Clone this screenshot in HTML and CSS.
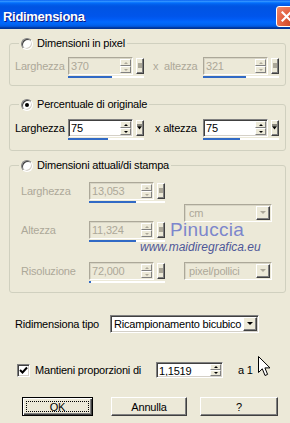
FILE: index.html
```html
<!DOCTYPE html>
<html lang="it">
<head>
<meta charset="utf-8">
<title>Ridimensiona</title>
<link rel="stylesheet" href="styles.css">
</head>
<body>
<div class="titlebar">
  <span class="title">Ridimensiona</span>
  <span class="close"><svg width="11" height="11" viewBox="0 0 11 11"><path d="M1.5 1.5 L9.5 9.5 M9.5 1.5 L1.5 9.5" stroke="#fff" stroke-width="2.2" stroke-linecap="square"/></svg></span>
</div>

<div class="content">
  <fieldset class="group g1">
    <legend><span class="radio"></span><span>Dimensioni in pixel</span></legend>
    <div class="row dis">
      <span class="lbl">Larghezza</span>
      <div class="num">
        <div class="box"><span class="field">370</span><span class="spin"><span class="up"></span><span class="dn"></span></span></div>
        <span class="sq"><i class="stop"></i></span>
        <div class="bar"><i style="width:44px"></i></div>
      </div>
      <span class="lbl x">x&nbsp; altezza</span>
      <div class="num">
        <div class="box"><span class="field">321</span><span class="spin"><span class="up"></span><span class="dn"></span></span></div>
        <span class="sq"><i class="stop"></i></span>
        <div class="bar"><i style="width:43px"></i></div>
      </div>
    </div>
  </fieldset>

  <fieldset class="group g2">
    <legend><span class="radio on"></span><span>Percentuale di originale</span></legend>
    <div class="row">
      <span class="lbl">Larghezza</span>
      <div class="num">
        <div class="box"><span class="field">75</span><span class="spin"><span class="up"></span><span class="dn"></span></span></div>
        <span class="sq"><svg width="6" height="7" viewBox="0 0 6 7"><path d="M0 0.5 H6" stroke="#000"/><path d="M0 2 H6 L3 6 Z" fill="#000"/></svg></span>
        <div class="bar"><i style="width:40px"></i></div>
      </div>
      <span class="lbl x2">x altezza</span>
      <div class="num">
        <div class="box"><span class="field">75</span><span class="spin"><span class="up"></span><span class="dn"></span></span></div>
        <span class="sq"><svg width="6" height="7" viewBox="0 0 6 7"><path d="M0 0.5 H6" stroke="#000"/><path d="M0 2 H6 L3 6 Z" fill="#000"/></svg></span>
        <div class="bar"><i style="width:37px"></i></div>
      </div>
    </div>
  </fieldset>

  <fieldset class="group g3">
    <legend><span class="radio"></span><span>Dimensioni attuali/di stampa</span></legend>
    <div class="g3body dis">
      <div class="g3left">
        <div class="prow">
          <span class="lbl">Larghezza</span>
          <div class="num">
            <div class="box"><span class="field">13,053</span><span class="spin"><span class="up"></span><span class="dn"></span></span></div>
            <span class="sq"><i class="stop"></i></span>
            <div class="bar"><i style="width:47px"></i></div>
          </div>
        </div>
        <div class="prow r2">
          <span class="lbl">Altezza</span>
          <div class="num">
            <div class="box"><span class="field">11,324</span><span class="spin"><span class="up"></span><span class="dn"></span></span></div>
            <span class="sq"><i class="stop"></i></span>
            <div class="bar"><i style="width:47px"></i></div>
          </div>
        </div>
        <div class="prow r3">
          <span class="lbl">Risoluzione</span>
          <div class="num">
            <div class="box"><span class="field">72,000</span><span class="spin"><span class="up"></span><span class="dn"></span></span></div>
            <span class="sq"><i class="stop"></i></span>
            <div class="bar"><i style="width:2px"></i></div>
          </div>
        </div>
      </div>
      <div class="g3right">
        <div class="combo c1"><span class="val">cm</span><span class="dd"><i class="tri"></i></span></div>
        <div class="combo c2"><span class="val">pixel/pollici</span><span class="dd"><i class="tri"></i></span></div>
      </div>
    </div>
  </fieldset>

  <div class="tiporow">
    <span class="tlabel">Ridimensiona tipo</span>
    <div class="combo sel"><span class="val">Ricampionamento bicubico</span><span class="dd"><i class="tri"></i></span></div>
  </div>

  <div class="checkrow">
    <span class="check"><svg width="9" height="9" viewBox="0 0 9 9"><path d="M1 4 L3.5 6.5 L8 1.5" fill="none" stroke="#000" stroke-width="2"/></svg></span>
    <span class="clabel">Mantieni proporzioni di</span>
    <div class="box ratio"><span class="field">1,1519</span><span class="spin"><span class="up"></span><span class="dn"></span></span></div>
    <span class="a1">a 1</span>
  </div>

  <div class="buttons">
    <button class="btn ok"><span class="focus">OK</span></button>
    <button class="btn annulla">Annulla</button>
    <button class="btn help">?</button>
  </div>
</div>

<div class="watermark">
  <span class="wm1">Pinuccia</span>
  <span class="wm2">www.maidiregrafica.eu</span>
</div>

<svg class="cursor" width="13" height="21" viewBox="0 0 13 21"><path d="M0.5 0.5 L0.5 16.5 L4.3 12.8 L7 19.5 L9.6 18.4 L6.9 11.9 L12 11.9 Z" fill="#fff" stroke="#000" stroke-width="1" stroke-linejoin="miter"/></svg>
</body>
</html>
```

FILE: styles.css
```css
* { box-sizing: border-box; }
html, body { margin: 0; padding: 0; }
body {
  width: 290px;
  height: 423px;
  overflow: hidden;
  position: relative;
  background: #ece9d8;
  font-family: "Liberation Sans", Arial, sans-serif;
  font-size: 11px;
  letter-spacing: -0.2px;
  color: #000;
}

/* ---------- title bar ---------- */
.titlebar {
  height: 29px;
  display: flex;
  align-items: center;
  justify-content: space-between;
  padding-left: 3px;
  background: linear-gradient(to bottom, #0058ee 0%, #3593ff 4%, #288eff 6%, #127dff 8%, #036ffc 10%, #0262ee 14%, #0057e5 20%, #0054e3 24%, #0055eb 56%, #005bf5 66%, #026afe 76%, #0062ef 86%, #0052d6 92%, #0040ab 94%, #003092 100%);
}
.title {
  color: #fff;
  font-weight: bold;
  font-size: 13px;
  letter-spacing: -0.3px;
  text-shadow: 1px 1px #0a1883;
  padding-top: 4px;
}
.close {
  width: 21px;
  height: 21px;
  margin-top: 4px;
  margin-right: -7px;
  border: 1px solid #fff;
  border-radius: 3px;
  background: radial-gradient(circle at 80% 80%, #cc4625 0%, #e25f3e 45%, #f08a6d 100%);
  display: flex;
  align-items: center;
  justify-content: center;
}

/* ---------- layout ---------- */
.content { padding: 8px 4px 0 9px; }

.group {
  margin: 0;
  padding: 0;
  min-width: 0;
  border: 1px solid #d0d0bf;
  border-radius: 3px;
}
.group legend {
  margin-left: 9px;
  padding: 0 2px;
  height: 13px;
  line-height: 13px;
  display: flex;
  align-items: center;
  gap: 4px;
}
.g1 .row { padding: 7px 0 7px 5px; }
.g2 { margin-top: 12px; }
.g2 .row { padding: 8px 0 10px 5px; }
.g3 { margin-top: 8px; }

.row {
  display: grid;
  grid-template-columns: 53px 76px 59px 76px;
  align-items: start;
}
.lbl { line-height: 18px; white-space: nowrap; }
.lbl.x { padding-left: 9px; }
.lbl.x2 { padding-left: 11px; }

.dis .lbl, .dis .field, .dis .val { color: #aca899; }

/* ---------- radio ---------- */
.radio {
  width: 12px;
  height: 12px;
  border-radius: 50%;
  background: #fff;
  border: 1px solid;
  border-color: #808080 #fff #fff #808080;
  box-shadow: inset 1px 1px #404040, inset -1px -1px #d4d0c8;
  display: flex;
  align-items: center;
  justify-content: center;
  flex: none;
}
.radio.on::after {
  content: "";
  width: 4px;
  height: 4px;
  border-radius: 50%;
  background: #000;
}

/* ---------- numeric control ---------- */
.num {
  display: grid;
  grid-template-columns: 65px 8px;
  column-gap: 3px;
  row-gap: 1px;
  align-items: start;
}
.box {
  height: 18px;
  display: flex;
  background: #fff;
  border: 1px solid;
  border-color: #808080 #fff #fff #808080;
  box-shadow: inset 1px 1px #404040, inset -1px -1px #d4d0c8;
  padding: 1px;
}
.dis .box {
  background: #ece9d8;
  border-color: #aca899 #fff #fff #aca899;
  box-shadow: inset 1px 1px #d8d5c5;
}
.field {
  flex: 1;
  padding-left: 1px;
  line-height: 14px;
  white-space: nowrap;
  overflow: hidden;
}
.spin {
  width: 11px;
  display: flex;
  flex-direction: column;
}
.spin span {
  flex: 1;
  display: flex;
  align-items: center;
  justify-content: center;
  background: #ece9d8;
  border: 1px solid;
  border-color: #fff #808080 #808080 #fff;
}
.spin .up::before, .spin .dn::before {
  content: "";
  border-left: 2px solid transparent;
  border-right: 2px solid transparent;
}
.spin .up::before { border-bottom: 2px solid #000; }
.spin .dn::before { border-top: 2px solid #000; }
.dis .spin .up::before { border-bottom-color: #aca899; }
.dis .spin .dn::before { border-top-color: #aca899; }

.sq {
  height: 16px;
  margin-top: 1px;
  display: flex;
  align-items: center;
  justify-content: center;
  background: #ece9d8;
  border: 1px solid;
  border-color: #fff #404040 #404040 #fff;
  box-shadow: inset -1px -1px #808080;
}
.sq .stop {
  display: block;
  width: 4px;
  height: 5px;
  margin: 0 1px 1px 0;
  background: #aca899;
}
.sq svg { margin: 0 1px 1px 0; }

.bar {
  grid-column: 1 / -1;
  height: 2px;
  background: #fff;
}
.bar i {
  display: block;
  height: 100%;
  background: #316ac5;
}

/* ---------- group 3 ---------- */
.g3body {
  display: flex;
  padding: 10px 0 9px 11px;
}
.g3left { width: 144px; }
.prow {
  display: grid;
  grid-template-columns: 68px 76px;
}
.prow.r2 { margin-top: 18px; }
.prow.r3 { margin-top: 20px; }
.g3right {
  margin-left: 19px;
  width: 88px;
  display: flex;
  flex-direction: column;
}
.combo.c1 { margin-top: 22px; }
.combo.c2 { margin-top: 40px; }

/* ---------- combo ---------- */
.combo {
  height: 18px;
  display: flex;
  background: #fff;
  border: 1px solid;
  border-color: #808080 #fff #fff #808080;
  box-shadow: inset 1px 1px #404040, inset -1px -1px #d4d0c8;
  padding: 1px;
}
.dis .combo {
  background: #ece9d8;
  border-color: #aca899 #fff #fff #aca899;
  box-shadow: inset 1px 1px #d8d5c5;
}
.combo .val {
  flex: 1;
  padding-left: 3px;
  line-height: 14px;
  white-space: nowrap;
  overflow: hidden;
}
.combo .dd {
  width: 14px;
  display: flex;
  align-items: center;
  justify-content: center;
  background: #ece9d8;
  border: 1px solid;
  border-color: #fff #404040 #404040 #fff;
  box-shadow: inset -1px -1px #808080;
}
.tri {
  display: block;
  margin: 0 1px 1px 0;
  border-left: 3px solid transparent;
  border-right: 3px solid transparent;
  border-top: 3px solid #000;
}
.dis .tri { border-top-color: #aca899; }

/* ---------- resize type ---------- */
.tiporow {
  margin-top: 22px;
  padding-left: 6px;
  display: flex;
  align-items: center;
}
.tlabel { width: 95px; }
.combo.sel { width: 149px; }
.combo.sel .val { padding-left: 2px; }

/* ---------- keep proportions ---------- */
.checkrow {
  margin-top: 29px;
  padding-left: 8px;
  display: flex;
  align-items: center;
  height: 16px;
}
.check {
  width: 13px;
  height: 13px;
  flex: none;
  background: #fff;
  border: 1px solid;
  border-color: #808080 #fff #fff #808080;
  box-shadow: inset 1px 1px #404040, inset -1px -1px #d4d0c8;
  display: flex;
  align-items: center;
  justify-content: center;
}
.clabel { margin-left: 5px; width: 121px; }
.box.ratio { width: 67px; height: 16px; }
.box.ratio .spin { width: 11px; }
.a1 { margin-left: 15px; }

/* ---------- buttons ---------- */
.buttons {
  margin-top: 19px;
  padding-left: 13px;
  display: flex;
}
.btn {
  height: 19px;
  font: inherit;
  letter-spacing: inherit;
  color: #000;
  background: #ece9d8;
  border: 1px solid;
  border-color: #fff #404040 #404040 #fff;
  box-shadow: inset -1px -1px #808080;
  padding: 0;
  display: flex;
  align-items: center;
  justify-content: center;
}
.btn.ok {
  width: 71px;
  border-color: #000;
  box-shadow: inset 1px 1px #fff, inset -1px -1px #404040, inset -2px -2px #808080;
}
.btn.ok .focus {
  display: flex;
  align-items: center;
  justify-content: center;
  width: 63px;
  height: 11px;
  border: 1px dotted #000;
}
.btn.annulla { width: 76px; margin-left: 18px; }
.btn.help { width: 78px; margin-left: 13px; }

/* ---------- overlays ---------- */
.watermark {
  position: absolute;
  left: 140px;
  top: 223px;
  width: 125px;
  height: 33px;
  pointer-events: none;
}
.wm1 {
  position: absolute;
  left: 30px;
  top: 0;
  font-size: 19px;
  line-height: 14px;
  letter-spacing: 0.3px;
  color: #7c86cc;
}
.wm2 {
  position: absolute;
  left: 0;
  top: 18px;
  font-size: 12px;
  line-height: 13px;
  font-style: italic;
  letter-spacing: 0;
  color: #4e5798;
}
.cursor {
  position: absolute;
  left: 258px;
  top: 356px;
}
```
